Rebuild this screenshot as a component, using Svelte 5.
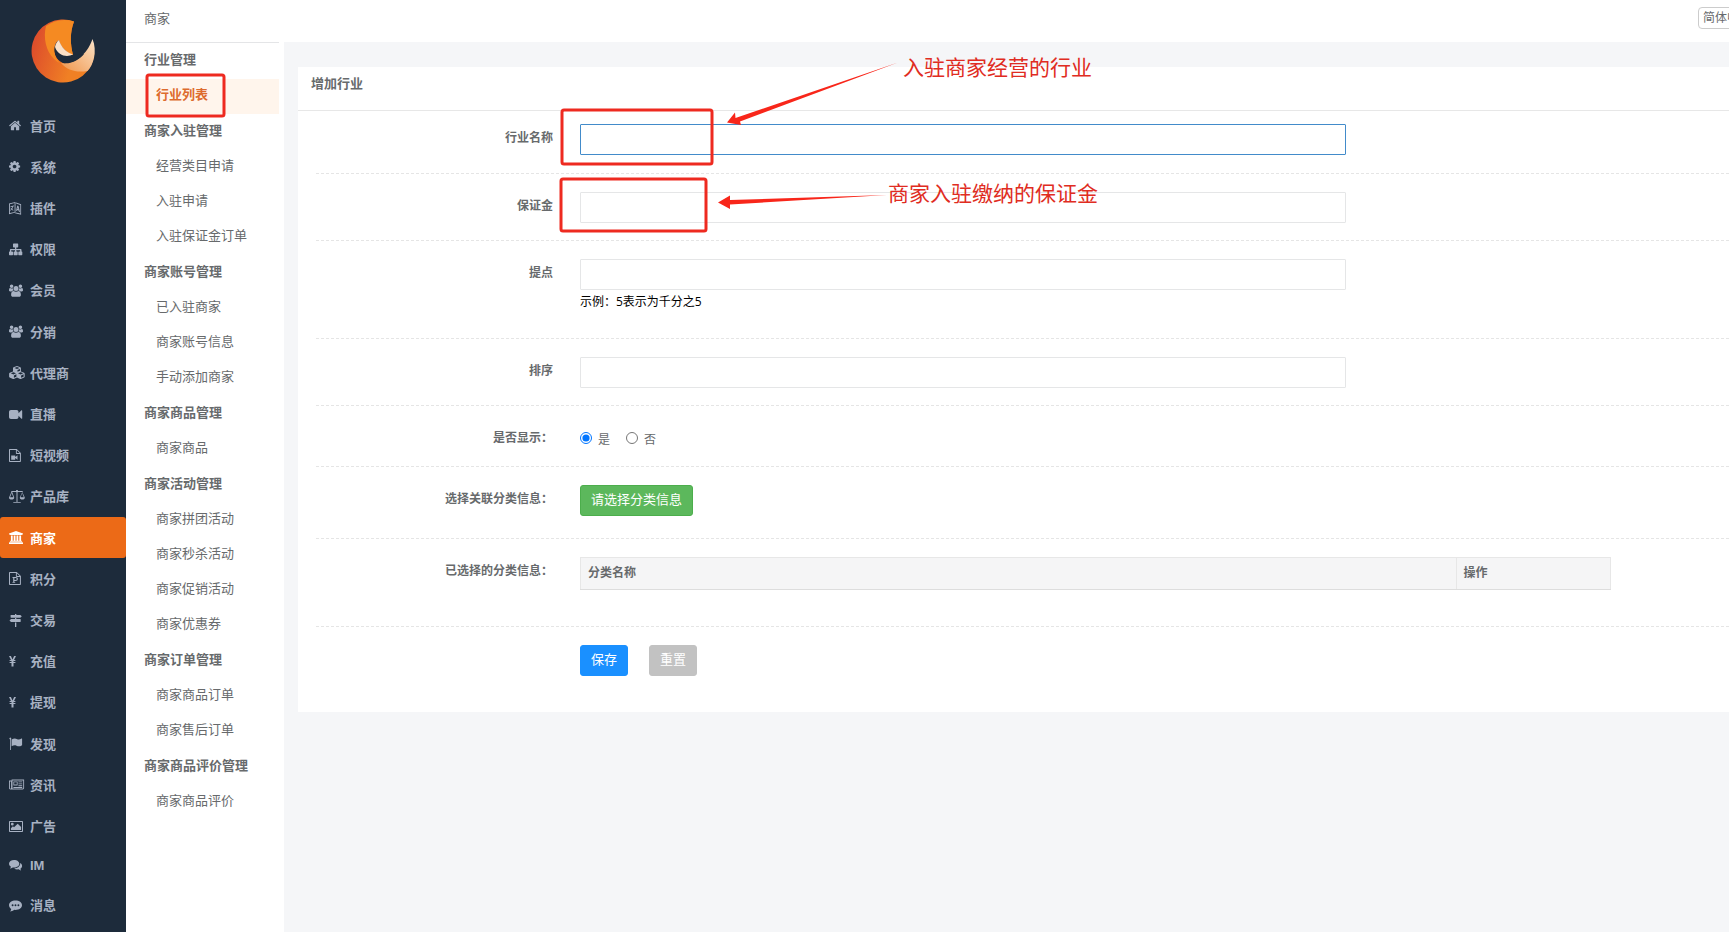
<script lang="ts">
	interface Icon {
		box?: string;
		d: string;
	}

	const small = '0 0 16 13';

	const icons: Record<string, Icon> = {
		home: {
			box: '64 0 2206 1792',
			d: 'M1472 992v480q0 26-19 45t-45 19h-384v-384h-256v384h-384q-26 0-45-19t-19-45v-480q0-1 .5-3t.5-3l575-474 575 474q1 2 1 6zm223-69l-62 74q-8 9-21 11h-3q-13 0-21-7l-692-577-692 577q-12 8-24 7-13-2-21-11l-62-74q-8-10-7-23.5t11-21.5l719-599q32-26 76-26t76 26l244 204v-195q0-14 9-23t23-9h192q14 0 23 9t9 23v408l219 182q10 8 11 21.5t-7 23.5z'
		},
		cog: {
			box: '128 0 2206 1792',
			d: 'M1152 896q0-106-75-181t-181-75-181 75-75 181 75 181 181 75 181-75 75-181zm512-109v222q0 12-8 23t-20 13l-185 28q-19 54-39 91 35 50 107 138 10 12 10 25t-9 23q-27 37-99 108t-94 71q-12 0-26-9l-138-108q-44 23-91 38-16 136-29 186-7 28-36 28h-222q-14 0-24.5-8.5t-11.5-21.5l-28-184q-49-16-90-37l-141 107q-10 9-25 9-14 0-25-11-126-114-165-168-7-10-7-23 0-12 8-23 15-21 51-66.5t54-70.5q-27-50-41-99l-183-27q-13-2-21-12.5t-8-23.5v-222q0-12 8-23t19-13l186-28q14-46 39-92-40-57-107-138-10-12-10-24 0-10 9-23 26-36 98.5-107.5t94.5-71.5q13 0 26 10l138 107q44-23 91-38 16-136 29-186 7-28 36-28h222q14 0 24.5 8.5t11.500 21.5l28 184q49 16 90 37l142-107q9-9 24-9 13 0 25 10 129 119 165 170 7 8 7 22 0 12-8 23-15 21-51 66.5t-54 70.5q26 50 41 98l183 28q13 2 21 12.5t8 23.5z'
		},
		language: { d: 'M0 1.500L6.500 0v10.500L0 12.200zM.9 2.200v8.900l4.700-1.200V1.100zM1.500 4.200l3.500-.6v.7l-.9.2c-.1.9-.4 1.700-.9 2.400l1.300 1.300-.5.5-1.300-1.200-1.200 1.300-.4-.6 1.100-1.200-.7-1 .5-.4.600.8c.4-.5.6-1 .7-1.700l-1.800.3zM7.100.6l5 1.600V12.800L6 11.300l.8-.9 4.500 1.200V2.900L7.100 1.500zM8.300 3.600l1.200.4 1.500 6-1.100-.3-.3-1.300-1.300-.4-.2 1.100-1-.3zm.5 2l-.3 1.400.9.300z' },
		sitemap: {
			d: 'M4.600.6h4a.6.6 0 01.6.6v2.600a.6.6 0 01-.6.6H7.300v1.700h4.200c.6 0 1 .4 1 1v1.400h.2c.3 0 .6.300.6.6v2.500c0 .3-.3.6-.6.6H9.900a.6.6 0 01-.6-.6V9.100c0-.3.3-.6.6-.6h1.200V7.300H7.300v1.200h.8c.3 0 .6.3.6.6v2.500c0 .3-.3.6-.6.6H5.200a.6.6 0 01-.6-.6V9.100c0-.3.3-.6.6-.6H6V7.300H2.200v1.200h1.200c.3 0 .6.3.6.6v2.500c0 .3-.3.6-.6.6H.6a.6.6 0 01-.6-.6V9.100c0-.3.3-.6.6-.6h.3V7.100c0-.6.400-1 1-1H6V4.400H4.600a.6.6 0 01-.6-.6V1.200c0-.3.300-.6.6-.6z'
		},
		users: {
			d: 'M7 2.100a2.500 2.500 0 110 5 2.500 2.500 0 010-5zM2.600.4a1.800 1.800 0 110 3.600 1.800 1.800 0 010-3.600zm8.800 0a1.800 1.800 0 110 3.600 1.800 1.800 0 010-3.600zM1 4.100c1 .6 2 .6 2.900.2 0 .9.200 1.600.7 2.200-.9 0-1.600.3-2.100 1H1.200C.3 7.500 0 7 0 6.300 0 5.300.2 4.200 1 4.100zm12 0c.8.1 1 1.200 1 2.200 0 .7-.3 1.200-1.200 1.200h-1.300c-.5-.7-1.200-1-2.100-1 .5-.6.7-1.300.7-2.200.9.400 1.900.4 2.900-.2zM4.600 7c1.500 1.100 3.300 1.100 4.800 0 1.600 0 2.500 1.700 2.500 3.700 0 1.300-.7 2.100-1.900 2.100H4c-1.200 0-1.900-.8-1.900-2.100 0-2 .9-3.700 2.500-3.700z'
		},
		cubes: {
			d: 'M8 0l3.400 1.300.5.700v3.500l3.200 1.300.6.700v3.300l-.5.7-3.300 1.500h-.8L8 11.500l-3.200 1.500H4L.6 11.500l-.5-.7V7.500l.6-.7L4 5.500V2l.5-.7zm0 .9L5.400 1.900 8 3l2.600-1.100zM8.500 5.700l2.500-1V2.900L8.500 4zM4.400 6.300L1.800 7.300l2.600 1.100L7 7.300zm7.200 0L9 7.300l2.600 1.100 2.600-1.100zM4.900 11.800l2.500-1.100V8.300L4.900 9.400zm7.200 0l2.500-1.100V8.300l-2.500 1.100z'
		},
		video: { d: 'M2 2h5.500c1.200 0 2 .8 2 2v1.300L12.400 2.300c.3-.3.8-.1.800.4v7.600c0 .5-.5.7-.8.4L9.500 7.700V9c0 1.200-.8 2-2 2H2C.8 11 0 10.200 0 9V4c0-1.200.8-2 2-2z' },
		filevideo: { d: 'M.7 0h7l4.200 4v8.300c0 .4-.3.7-.7.7H.7a.7.7 0 01-.7-.7V.7C0 .3.3 0 .7 0zM1 1v11h9.900V5H7.600a.7.7 0 01-.7-.7V1zM7.800 1.300V4h2.800zM2.200 6.500h4v1.600L8.500 6.300v4.500L6.200 9v1.800h-4z' },
		scale: { d: 'M7 .9a1 1 0 012 0l4.700.2v.8h-.5l2.600 5.700c0 1.500-1 2-2.500 2s-2.500-.5-2.500-2l2.500-5.700H8.800a1 1 0 01-.3.300v9.700h3.200v.9H4.300v-.9h3.200V2.200a1 1 0 01-.3-.3H3.200l2 5.700c0 1.500-1 2-2.600 2s-2.600-.5-2.600-2L2.400 1.900h-.1v-.8zM2.700 3L1.100 7.200h3.200zm10.500 0l-1.600 4.200h3.200z' },
		university: { d: 'M7 0l7 2.600v1h-.9c0 .3-.2.400-.5.4H1.400c-.3 0-.5-.1-.5-.4H0v-1zM1.900 4.500h1.800v5.200h1V4.500h1.800v5.200h1V4.500h1.800v5.200h1V4.500h1.800v5.200h.5c.3 0 .5.2.5.500v.5H.9v-.5c0-.3.2-.5.500-.5h.5zM.5 11.200h13c.3 0 .5.2.5.5V13H0v-1.300c0-.3.2-.5.500-.5z' },
		filep: { d: 'M.7 0h7l4.200 4v8.300c0 .4-.3.7-.7.7H.7a.7.7 0 01-.7-.7V.7C0 .3.3 0 .7 0zM1 1v11h9.900V5H7.600a.7.7 0 01-.7-.7V1zM7.800 1.300V4h2.800zM3.500 5h3.200c1.400 0 2.200.7 2.200 1.900S8 8.900 6.700 8.900H5.400v1h.8v.9H3.500v-.9h.7v-4h-.7zm1.900.9v2.100h1.100c.8 0 1.200-.3 1.200-1s-.4-1.100-1.200-1.100z' },
		signs: { d: 'M6 0h1.300v1h4l1.500 1.300-1.500 1.400H2a.4.4 0 01-.4-.4v-2C1.600 1.100 1.800 1 2 1h4zM6 4.100h1.300v1h4c.2 0 .4.200.4.400v2c0 .2-.2.4-.4.4H2L.5 6.500 2 5.100h4zM6 8.400h1.300V13H6z' },
		yen: { d: 'M0 1h1.900l1.600 3.500L5.100 1H7L5 5h1.400v1.100H4.500v.8h1.900V8H4.500v3.500H2.500V8H.6V6.900h1.900v-.8H.6V5H2z' },
		flag: { d: 'M.9.700a1 1 0 011 1.700V13h-.8V2.400A1 1 0 01.9.700zM2.600 2.600c2.200-1.300 3.600-1.500 5.600-.4 1.600.8 2.700.3 4.300-.6.3-.2.6 0 .6.3v6.300c-2.400 1.400-3.600 1.500-5.600.5-1.800-.9-3.100-.4-4.900.6z' },
		newspaper: { d: 'M2.600 1.500h12.500v8.600c0 .9-.6 1.400-1.500 1.400H1.400C.5 11.500 0 11 0 10.100V2.500h2.600zM.9 3.400v6.700c0 .7 1.200.7 1.200 0V3.400zM3.500 2.400v8.200h10c.5 0 .7-.200.7-.6V2.400zM4.400 3.400h4.200v4H4.400zm.8.8v2.400h2.600V4.200zM9.400 3.400h3.800v.9H9.400zm0 2h3.800v.9H9.400zm0 1.900h3.800v.9H9.400zm-5 1.800h8.800v.9H4.400z' },
		picture: { d: 'M1 1h12c.6 0 1 .4 1 1v9c0 .6-.4 1-1 1H1c-.6 0-1-.4-1-1V2c0-.6.4-1 1-1zm0 1v9h12V2zM3.300 2.800a1.400 1.400 0 110 2.800 1.400 1.400 0 010-2.800zM1.900 8.200l2-2 1.100 1.100 3.700-3.600L12.100 7v3H1.900z' },
		comments: { d: 'M5.100 1c2.900 0 5.200 1.600 5.200 3.800S8 8.500 5.100 8.500c-.5 0-.9 0-1.300-.1C2.800 9.100 1.800 9.400.9 9.500c.5-.5.9-1 1-1.800C.7 7 0 6 0 4.800 0 2.600 2.200 1 5.100 1zm6.100 3c1.200.7 1.900 1.700 1.900 2.900 0 1.100-.6 2.100-1.700 2.800.1.8.5 1.200.9 1.700-1-.1-1.900-.4-2.800-1.100-1.600.3-3.200 0-4.300-.8 3.300-.1 6.200-2.300 6-5.500z' },
		commenting: { d: 'M6.500 1.500c3.700 0 6.500 2 6.500 4.700s-2.800 4.700-6.500 4.700l-1.200-.1C4 11.900 2.400 12.400.9 12.500c.8-.7 1.200-1.500 1.300-2.600C.9 9.100 0 7.700 0 6.200c0-2.700 2.900-4.700 6.500-4.700zM3.600 5.300a.95.950 0 100 1.900.95.950 0 000-1.900zm2.900 0a.95.950 0 100 1.900.95.950 0 000-1.900zm2.900 0a.95.950 0 100 1.900.95.950 0 000-1.900z' }
	};

	const nav = [
		{ name: '首页', icon: 'home' },
		{ name: '系统', icon: 'cog' },
		{ name: '插件', icon: 'language' },
		{ name: '权限', icon: 'sitemap' },
		{ name: '会员', icon: 'users' },
		{ name: '分销', icon: 'users' },
		{ name: '代理商', icon: 'cubes' },
		{ name: '直播', icon: 'video' },
		{ name: '短视频', icon: 'filevideo' },
		{ name: '产品库', icon: 'scale' },
		{ name: '商家', icon: 'university' },
		{ name: '积分', icon: 'filep' },
		{ name: '交易', icon: 'signs' },
		{ name: '充值', icon: 'yen' },
		{ name: '提现', icon: 'yen' },
		{ name: '发现', icon: 'flag' },
		{ name: '资讯', icon: 'newspaper' },
		{ name: '广告', icon: 'picture' },
		{ name: 'IM', icon: 'comments' },
		{ name: '消息', icon: 'commenting' }
	];

	const menu = [
		{ title: '行业管理', items: ['行业列表'] },
		{ title: '商家入驻管理', items: ['经营类目申请', '入驻申请', '入驻保证金订单'] },
		{ title: '商家账号管理', items: ['已入驻商家', '商家账号信息', '手动添加商家'] },
		{ title: '商家商品管理', items: ['商家商品'] },
		{ title: '商家活动管理', items: ['商家拼团活动', '商家秒杀活动', '商家促销活动', '商家优惠券'] },
		{ title: '商家订单管理', items: ['商家商品订单', '商家售后订单'] },
		{ title: '商家商品评价管理', items: ['商家商品评价'] }
	];

	let section = $state('商家');
	let page = $state('行业列表');
	let form = $state({ name: '', deposit: '', rate: '', sort: '', show: '1' });

	function reset() {
		form = { name: '', deposit: '', rate: '', sort: '', show: '1' };
	}
</script>

<div class="app">
	<aside class="sidebar">
		<a class="logo" href="#home" aria-label="首页">
			<svg viewBox="0 0 74 74" width="74" height="74">
				<defs>
					<linearGradient id="body" x1="0" y1="0.3" x2="1" y2="0.6">
						<stop offset="0" stop-color="#dc4a2c" />
						<stop offset="0.7" stop-color="#f08024" />
					</linearGradient>
					<linearGradient id="tail" x1="0" y1="1" x2="1" y2="0">
						<stop offset="0" stop-color="#f0954a" />
						<stop offset="1" stop-color="#fbe3c8" />
					</linearGradient>
				</defs>
				<path fill="url(#body)" d="M48 7.500A31.500 31.500 0 1 0 68.500 39C62 48 49 53 39 49.500C30 46 27 39 28.500 32C29.500 29 31 27 33 26C35 33 40 38 47 41C44 29 44 18 48 7.500z" />
				<path fill="#f58a22" d="M48 7.500C38 4.500 28 6.500 20 12C17 24 20 37 28 45C30 47 32 48 34 49C29 44 27.500 37 29 31C30 28 31.500 27 33 26C35 33 40 38 47 41C44 29 44 18 48 7.500z" />
				<path fill="url(#tail)" d="M66.500 25C62 38 51 51 35 49C41 56 50 59 61.500 57C67.500 51 71.500 37 66.500 25z" />
				<path fill="#1d2b3b" d="M29 32C27.500 39 30 46 38 49.300C46 50 54 45 58 40L47 41C40 43 32 41 29 32z" />
				<path fill="#fbe0c6" d="M33 26C35 33 40 38 47 40.500C41 43.500 32 42 29 33C29.500 30 31 27.500 33 26z" />
			</svg>
		</a>
		<nav>
			{#each nav as n (n.name)}
				<a href="#{n.icon}" class:active={section === n.name} class:latin={n.name === 'IM'} onclick={() => (section = n.name)}>
					<svg viewBox={icons[n.icon].box ?? small} width="16" height="13" aria-hidden="true">
						<path d={icons[n.icon].d} fill-rule="evenodd" />
					</svg>
					<span>{n.name}</span>
				</a>
			{/each}
		</nav>
	</aside>

	<div class="submenu">
		<h1>商家</h1>
		{#each menu as g (g.title)}
			<h2>{g.title}</h2>
			<ul>
				{#each g.items as item (item)}
					<li><a href="#{item}" class:current={page === item} onclick={() => (page = item)}>{item}</a></li>
				{/each}
			</ul>
		{/each}
	</div>

	<div class="content">
		<header>
			<select aria-label="语言">
				<option>简体中文</option>
				<option>English</option>
			</select>
		</header>

		<main>
			<h3>增加行业</h3>
			<form onsubmit={(e) => e.preventDefault()}>
				<div class="row first">
					<label for="name">行业名称</label>
					<input id="name" class="focused" type="text" bind:value={form.name} />
				</div>
				<div class="row">
					<label for="deposit">保证金</label>
					<input id="deposit" type="text" bind:value={form.deposit} />
				</div>
				<div class="row">
					<label for="rate">提点</label>
					<div>
						<input id="rate" type="text" bind:value={form.rate} />
						<p class="hint">示例：5表示为千分之5</p>
					</div>
				</div>
				<div class="row">
					<label for="sort">排序</label>
					<input id="sort" type="text" bind:value={form.sort} />
				</div>
				<div class="row">
					<span class="label" id="show-label">是否显示：</span>
					<div class="radios" role="radiogroup" aria-labelledby="show-label">
						<label><input type="radio" name="show" value="1" bind:group={form.show} />是</label>
						<label><input type="radio" name="show" value="0" bind:group={form.show} />否</label>
					</div>
				</div>
				<div class="row pick">
					<span class="label">选择关联分类信息：</span>
					<div><button type="button" class="green">请选择分类信息</button></div>
				</div>
				<div class="row picked">
					<span class="label">已选择的分类信息：</span>
					<table>
						<thead>
							<tr><th>分类名称</th><th class="action">操作</th></tr>
						</thead>
					</table>
				</div>
				<div class="row last">
					<div class="buttons">
						<button type="submit" class="blue">保存</button>
						<button type="button" class="grey" onclick={reset}>重置</button>
					</div>
				</div>
			</form>
		</main>
	</div>

	<svg class="notes" width="1200" height="300">
		<g class="frames">
			<rect x="147" y="75" width="77" height="41" rx="2" />
			<rect x="562" y="110" width="150" height="54" rx="2" />
			<rect x="561" y="179" width="145" height="52" rx="2" />
		</g>
		<path d="M727 122.500l8-10 .5 5.500L898 62.500 740 121.500l1 3.500z" />
		<path d="M718 202.500l12-7v4.500l157-5-157 9.500v4.500z" />
		<text x="903" y="75">入驻商家经营的行业</text>
		<text x="888" y="201">商家入驻缴纳的保证金</text>
	</svg>
</div>

<style>
	:global(body) { margin: 0; overflow-x: hidden; }
	.app {
		position: relative; display: flex; min-height: 100vh; overflow: hidden; background: #fff;
		font: 13px "Liberation Sans", "Noto Sans CJK SC", sans-serif; color: #676a6c;
	}
	a { color: inherit; text-decoration: none; }
	h1, h2, h3, ul, p { margin: 0; padding: 0; }
	ul { list-style: none; }

	.sidebar { flex: none; width: 126px; display: flex; flex-direction: column; background: #1d2b3b; }
	.logo { height: 91px; padding: 14px 0 0 26px; }
	nav { flex: 1; display: flex; flex-direction: column; padding-bottom: 6px; }
	nav a {
		flex: 1 0 41px; display: flex; align-items: center; gap: 5px; padding-left: 9px;
		border-radius: 3px; color: #a7b1c2; font-weight: 700;
	}
	nav a.latin { flex: none; height: 38px; }
	nav a.active { background: #ec6a17; color: #fff; }
	nav svg { fill: currentColor; }
	nav span { padding-bottom: 1px; }

	.submenu { flex: none; width: 153px; margin-right: 5px; }
	h1 { height: 42px; border-bottom: 1px solid #e4e5e7; padding-left: 18px; font-size: 13px; line-height: 37px; font-weight: 400; }
	h2 { height: 36px; padding-left: 18px; font-size: 13px; line-height: 34px; font-weight: 700; }
	li a { display: block; height: 35px; padding-left: 30px; line-height: 32px; }
	li a.current { background: #fff5ec; color: #dd6b2d; font-weight: 700; }

	.content { flex: 1; min-width: 0; background: #f5f6f8; }
	header { display: flex; justify-content: flex-end; height: 42px; background: #fff; }
	select {
		appearance: none; box-sizing: border-box; width: 80px; height: 22px; margin: 7px -49px 0 0; padding: 0 4px;
		border: 1px solid #ccc; border-radius: 4px; background: #fff; color: #676a6c; font: inherit; font-size: 12px;
	}

	main { margin: 25px 0 0 14px; background: #fff; }
	h3 { height: 43px; padding-left: 13px; border-bottom: 1px solid #e7e7e7; font-size: 13px; line-height: 34px; font-weight: 700; }
	form { padding-left: 18px; font-size: 12px; }
	.row {
		display: grid; grid-template-columns: 264fr 766fr 265fr 118fr; align-items: start;
		padding: 18px 0 17px; border-bottom: 1px dashed #e5e5e5;
	}
	.row > label, .label { height: 25px; padding-right: 27px; text-align: right; font-weight: 700; line-height: 28px; }
	.row.first { padding: 13px 0 18px; }
	input[type="text"] {
		display: block; box-sizing: border-box; width: 100%; height: 31px; padding: 4px 10px;
		border: 1px solid #e5e6e7; border-radius: 1px; background: #fff; font: inherit; outline: none;
	}
	input.focused, input[type="text"]:focus { border-color: #428bca; }
	.hint { height: 31px; color: #000; font-family: "Open Sans", "Noto Sans CJK SC", sans-serif; line-height: 24px; }
	.radios { display: flex; gap: 16px; height: 25px; }
	.radios label { display: flex; align-items: center; gap: 6px; height: 28px; }
	.radios input { width: 12px; height: 12px; margin: 0; }
	.pick { padding-bottom: 22px; }
	.picked { padding-bottom: 36px; }
	table { grid-column: 2 / 4; border-collapse: collapse; background: #f5f5f6; }
	th { height: 32px; padding: 0 7px 2px; box-sizing: border-box; border: 1px solid #e7e7e7; border-bottom-color: #ddd; text-align: left; line-height: 28px; }
	.action { width: 15%; }
	.last { padding-bottom: 36px; border-bottom: 0; }
	.buttons { grid-column: 2; display: flex; gap: 21px; }
	button { display: block; height: 31px; padding: 0 10px 5px; border: 1px solid; border-radius: 3px; color: #fff; font: inherit; font-size: 13px; }
	.green { border-color: #4cae4c; background: #5cb85c; }
	.blue { border-color: #1a90ff; background: #1a90ff; }
	.grey { border-color: #c2c2c2; background: #c2c2c2; }

	.notes { position: absolute; top: 0; left: 0; pointer-events: none; fill: #f8261a; }
	.frames { fill: none; stroke: #ee2a20; stroke-width: 3; }
	.notes text { fill: #e02c22; font-size: 21px; }
</style>
